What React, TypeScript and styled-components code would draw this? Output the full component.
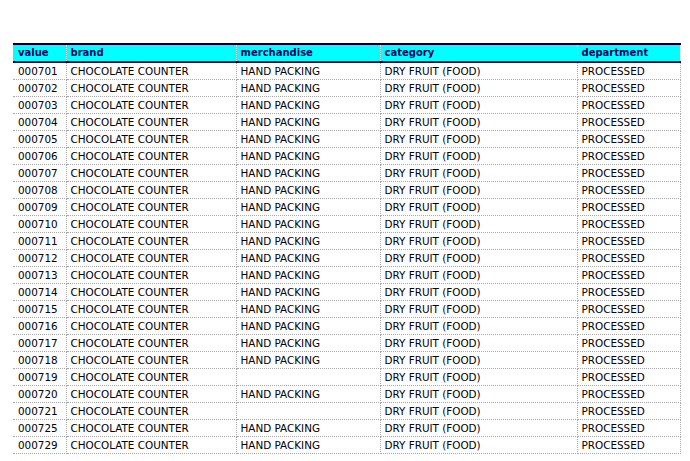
import React from "react";
import styled, { createGlobalStyle } from "styled-components";

const Global = createGlobalStyle`
  html, body { margin: 0; padding: 0; background: #fff; }
  body { font-family: "DejaVu Sans", Verdana, sans-serif; }
`;

const Page = styled.div`
  padding: 43px 10px 0 13px;
`;

const Table = styled.table`
  border-collapse: collapse;
  table-layout: fixed;
  width: 667px;
  font-size: 10.4px;
`;

const Col = styled.col<{ $w: number }>`
  width: ${(p) => p.$w}px;
`;

const HeadRow = styled.tr`
  background: #00ffff;
  border-top: 2px solid #000040;
  border-bottom: 2px solid #000040;
`;

const Th = styled.th`
  box-sizing: border-box;
  height: 16px;
  padding: 0 0 0 4px;
  text-align: left;
  font-weight: bold;
  font-size: 10px;
  color: #000060;
  border-right: 1px dotted #d8d8d8;
  white-space: nowrap;
  line-height: 16px;
  &:first-child { padding-left: 5px; }
`;

const Td = styled.td`
  box-sizing: border-box;
  height: 17px;
  padding: 0 0 0 4px;
  color: #000;
  line-height: 16px;
  border-right: 1px dotted #a8a8a8;
  border-bottom: 1px dotted #a8a8a8;
  white-space: nowrap;
  overflow: hidden;
  &:first-child { padding-left: 5px; }
`;

const cols = [
  { key: "value", w: 53 },
  { key: "brand", w: 170 },
  { key: "merchandise", w: 144 },
  { key: "category", w: 197 },
  { key: "department", w: 103 },
];

const values = [
  "000701","000702","000703","000704","000705","000706","000707","000708","000709","000710",
  "000711","000712","000713","000714","000715","000716","000717","000718","000719","000720",
  "000721","000725","000729",
];
const noMerch = new Set(["000719", "000721"]);

export default function App() {
  return (
    <Page>
      <Global />
      <Table>
        <colgroup>
          {cols.map((c) => (
            <Col key={c.key} $w={c.w} />
          ))}
        </colgroup>
        <thead>
          <HeadRow>
            {cols.map((c) => (
              <Th key={c.key}>{c.key}</Th>
            ))}
          </HeadRow>
        </thead>
        <tbody>
          {values.map((v) => (
            <tr key={v}>
              <Td>{v}</Td>
              <Td>CHOCOLATE COUNTER</Td>
              <Td>{noMerch.has(v) ? "" : "HAND PACKING"}</Td>
              <Td>DRY FRUIT (FOOD)</Td>
              <Td>PROCESSED</Td>
            </tr>
          ))}
        </tbody>
      </Table>
    </Page>
  );
}
